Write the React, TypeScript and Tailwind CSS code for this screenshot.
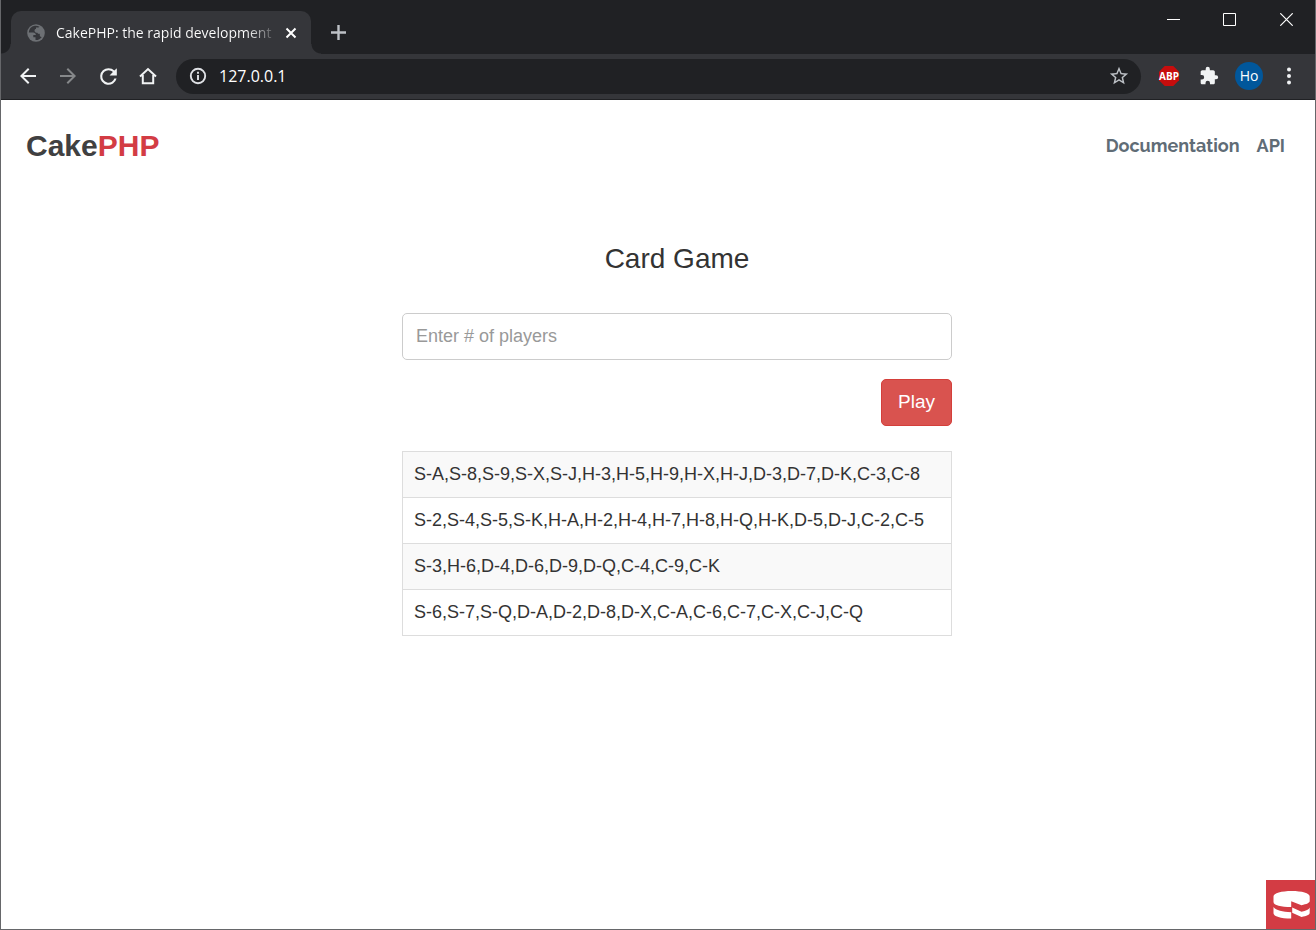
import type { ReactNode } from "react";

const hands = [
  "S-A,S-8,S-9,S-X,S-J,H-3,H-5,H-9,H-X,H-J,D-3,D-7,D-K,C-3,C-8",
  "S-2,S-4,S-5,S-K,H-A,H-2,H-4,H-7,H-8,H-Q,H-K,D-5,D-J,C-2,C-5",
  "S-3,H-6,D-4,D-6,D-9,D-Q,C-4,C-9,C-K",
  "S-6,S-7,S-Q,D-A,D-2,D-8,D-X,C-A,C-6,C-7,C-X,C-J,C-Q",
];

type IconButtonProps = { label: string; className?: string; children: ReactNode };

function IconButton({ label, className = "", children }: IconButtonProps) {
  return (
    <button type="button" aria-label={label} className={`flex shrink-0 items-center justify-center ${className}`}>
      {children}
    </button>
  );
}

function Glyph({ d, className = "size-5" }: { d: string; className?: string }) {
  return (
    <svg viewBox="0 0 24 24" className={className} fill="currentColor" aria-hidden="true">
      <path d={d} />
    </svg>
  );
}

function TabStrip() {
  return (
    <div className="flex h-[54px] items-start bg-[#202124]">
      <div className="relative ml-[10px] mt-[11px] flex h-[43px] w-[300px] items-center rounded-t-[10px] bg-[#35363a] pl-4 pr-[11px]">
        <span className="absolute -left-[10px] bottom-0 size-[10px] bg-[radial-gradient(circle_at_top_left,transparent_9px,#35363a_10px)]" />
        <span className="absolute -right-[10px] bottom-0 size-[10px] bg-[radial-gradient(circle_at_top_right,transparent_9px,#35363a_10px)]" />
        <svg viewBox="0 0 18 18" className="size-[18px] shrink-0" aria-hidden="true">
          <circle cx="9" cy="9" r="8.8" fill="#6d7074" />
          <path
            d="M7.8 1.8A7.2 7.2 0 0 0 1.8 8.5h4.4c1.5 0 2.7 1 2.7 2.4H6.3v2.4h2.2v2.8A7.2 7.2 0 0 0 14.8 13c-1.3.1-2-.6-2-1.7V9.8c-1 .4-2.200 0-2.400-1-1.700 0-2.900-.9-2.900-2.300 0-.9.6-1.500 1.500-1.500V3.600h2.400l1.100-.8A7 7 0 0 0 7.800 1.800z"
            fill="#35363a"
          />
        </svg>
        <span className="ml-[11px] flex-1 overflow-hidden whitespace-nowrap bg-[linear-gradient(to_right,#fff_86%,#35363a)] bg-clip-text text-[14px] leading-5 text-transparent">
          CakePHP: the rapid development
        </span>
        <IconButton label="Close tab" className="ml-1 size-[18px] text-white">
          <svg viewBox="0 0 18 18" className="size-[18px]" stroke="currentColor" strokeWidth="2" aria-hidden="true">
            <path d="M4.500 4.500l9 9M13.500 4.500l-9 9" />
          </svg>
        </IconButton>
      </div>
      <IconButton label="New tab" className="ml-[17px] mt-[22px] size-5 text-[#bdc1c6]">
        <svg viewBox="0 0 20 20" className="size-5" stroke="currentColor" strokeWidth="2.400" aria-hidden="true">
          <path d="M10.500 3v15M3 10.500h15" />
        </svg>
      </IconButton>
      <div className="ml-auto flex pr-[2px] text-white">
        <IconButton label="Minimize" className="h-[39px] w-14">
          <svg viewBox="0 0 13 13" className="size-[13px]" fill="currentColor" aria-hidden="true">
            <path d="M0 6h13v1H0z" />
          </svg>
        </IconButton>
        <IconButton label="Maximize" className="h-[39px] w-14">
          <svg viewBox="0 0 13 13" className="size-[13px]" fill="none" stroke="currentColor" aria-hidden="true">
            <path d="M.5.5h12v12H.5z" />
          </svg>
        </IconButton>
        <IconButton label="Close" className="h-[39px] w-14 pl-[3px]">
          <svg viewBox="0 0 13 13" className="size-[13px]" stroke="currentColor" strokeWidth="1.200" aria-hidden="true">
            <path d="M.3.3l12.400 12.400M12.700.3L.3 12.700" />
          </svg>
        </IconButton>
      </div>
    </div>
  );
}

function Toolbar() {
  return (
    <div className="flex h-[46px] items-center border-b border-[#202124] bg-[#35363a] pb-px pr-4 text-[#f1f3f4]">
      <div className="flex gap-4 pl-[15px]">
        <IconButton label="Back" className="size-6">
          <Glyph className="size-6" d="M20 11H7.830l5.590-5.590L12 4l-8 8 8 8 1.410-1.410L7.830 13H20v-2z" />
        </IconButton>
        <IconButton label="Forward" className="size-6 text-[#86888a]">
          <Glyph className="size-6" d="M12 4l-1.410 1.410L16.170 11H4v2h12.170l-5.580 5.590L12 20l8-8z" />
        </IconButton>
        <IconButton label="Reload" className="size-6">
          <Glyph
            className="size-[25px] shrink-0"
            d="M17.650 6.350A7.960 7.960 0 0 0 12 4a8 8 0 1 0 7.730 10h-2.080A6 6 0 1 1 12 6c1.660 0 3.140.69 4.220 1.780L13 11h7V4l-2.350 2.350z"
          />
        </IconButton>
        <IconButton label="Home" className="size-6">
          <svg viewBox="0 0 20 20" className="size-5" fill="none" stroke="currentColor" strokeWidth="2" aria-hidden="true">
            <path d="M2 10.500L10 3l8 7.500M4.800 9v8.200h10.400V9" />
          </svg>
        </IconButton>
      </div>
      <div className="ml-4 flex h-[35px] flex-1 items-center rounded-full bg-[#202124] pl-3 pr-3">
        <svg viewBox="0 0 20 20" className="size-5 shrink-0" fill="none" stroke="#dfe1e5" strokeWidth="1.900" aria-hidden="true">
          <circle cx="10" cy="10" r="7.200" />
          <path d="M10 9v5M10 5.800v1.900" />
        </svg>
        <input
          aria-label="Address"
          defaultValue="127.0.0.1"
          className="ml-[11px] min-w-0 flex-1 bg-transparent text-[16px] leading-6 text-white outline-none"
        />
        <IconButton label="Bookmark" className="size-5 text-[#bdc1c6]">
          <Glyph
            className="size-[22px] shrink-0"
            d="M22 9.240l-7.190-.62L12 2 9.190 8.630 2 9.240l5.460 4.730L5.820 21 12 17.270 18.180 21l-1.630-7.030L22 9.240zM12 15.400l-3.760 2.270 1-4.280-3.320-2.880 4.380-.38L12 6.100l1.710 4.040 4.380.38-3.320 2.880 1 4.280L12 15.400z"
          />
        </IconButton>
      </div>
      <IconButton label="Adblock Plus" className="ml-[17px] size-[22px]">
        <svg viewBox="0 0 22 22" className="size-[22px]" aria-hidden="true">
          <path d="M6.700 1h8.600L21 6.700v8.600L15.300 21H6.700L1 15.300V6.700z" fill="#c70d0d" />
          <text x="11" y="14.500" textAnchor="middle" fontSize="10" fontWeight="700" fill="#fff">
            ABP
          </text>
        </svg>
      </IconButton>
      <IconButton label="Extensions" className="ml-[18px] size-[22px]">
        <Glyph
          className="size-5"
          d="M20.500 11H19V7c0-1.100-.9-2-2-2h-4V3.500a2.500 2.500 0 0 0-5 0V5H4c-1.100 0-1.990.9-1.990 2v3.800H3.500a2.700 2.700 0 0 1 0 5.400H2V20c0 1.100.9 2 2 2h3.800v-1.500a2.700 2.700 0 0 1 5.400 0V22H17c1.100 0 2-.9 2-2v-4h1.500a2.500 2.500 0 0 0 0-5z"
        />
      </IconButton>
      <button type="button" className="ml-[15px] size-7 shrink-0 rounded-full bg-[#01579b] text-center text-[14px] leading-7 text-white">
        Ho
      </button>
      <IconButton label="Menu" className="ml-4 size-5">
        <svg viewBox="0 0 20 20" className="size-5" fill="currentColor" aria-hidden="true">
          <circle cx="10" cy="3.500" r="2" />
          <circle cx="10" cy="10" r="2" />
          <circle cx="10" cy="16.500" r="2" />
        </svg>
      </IconButton>
    </div>
  );
}

export default function App() {
  return (
    <div className="relative flex min-h-screen flex-col border border-t-0 border-[#66676a] bg-white">
      <header className="font-['Open_Sans','Noto_Sans',sans-serif]">
        <TabStrip />
        <Toolbar />
      </header>
      <div className="flex-1 font-['Liberation_Sans',Arial,sans-serif] text-[#333]">
        <nav className="flex items-center justify-between pl-[25px] pr-[30px] pt-6">
          <a href="#home" className="text-[30px] font-bold leading-[44px] text-[#404041]">
            Cake<span className="text-[#d33c44]">PHP</span>
          </a>
          <div className="flex gap-[17px] font-[Raleway,Lato,sans-serif] text-[18px] font-bold leading-[42px] text-[#606c76]">
            <a href="#documentation">Documentation</a>
            <a href="#api">API</a>
          </div>
        </nav>
        <main className="px-4 pt-[70px] sm:pl-[54px]">
          <div className="mx-auto max-w-[550px]">
            <h1 className="text-center text-[28px] leading-[42px]">Card Game</h1>
            <form className="mt-[33px] flex flex-col items-end" onSubmit={(event) => event.preventDefault()}>
              <input
                type="text"
                aria-label="Number of players"
                placeholder="Enter # of players"
                className="h-[47px] w-full rounded-[5px] border border-[#ccc] px-[13px] text-[18px] outline-none placeholder:text-[#999]"
              />
              <button
                type="submit"
                className="mt-[19px] h-[47px] rounded-[5px] border border-[#d43f3a] bg-[#d9534f] px-4 text-[19px] text-white"
              >
                Play
              </button>
            </form>
            <table className="mt-[25px] w-full border-collapse border border-[#ddd] text-[18px] leading-[25px]">
              <tbody>
                {hands.map((hand) => (
                  <tr key={hand} className="odd:bg-[#f9f9f9]">
                    <td className="border border-[#ddd] px-[11px] py-[10px]">{hand}</td>
                  </tr>
                ))}
              </tbody>
            </table>
          </div>
        </main>
      </div>
      <button type="button" aria-label="Debug toolbar" className="absolute bottom-0 right-0 size-[49px] bg-[#d33c44]">
        <svg viewBox="0 0 49 49" className="size-[49px]" fill="#fff" aria-hidden="true">
          <path d="M7.500 16.500c0-3.400 8-5.500 18.200-5.500s18 2.100 18 5.500v4.500c0 1.800-3 3.200-8.200 4.200L25.200 21.200v5.800c-10 0-17.700-1.800-17.700-5z" />
          <path d="M7.500 27c2.500 3.300 9 5 17.700 5.200v6.300c-10.500 0-17.700-2.200-17.700-5.300z" />
          <path d="M26.200 27.500l9.300 4.200c4.500-.8 7.500-2.200 8.200-4.200v5.200c0 2-3 3.400-8.200 4.200l-9.300-4.200z" />
        </svg>
      </button>
    </div>
  );
}
